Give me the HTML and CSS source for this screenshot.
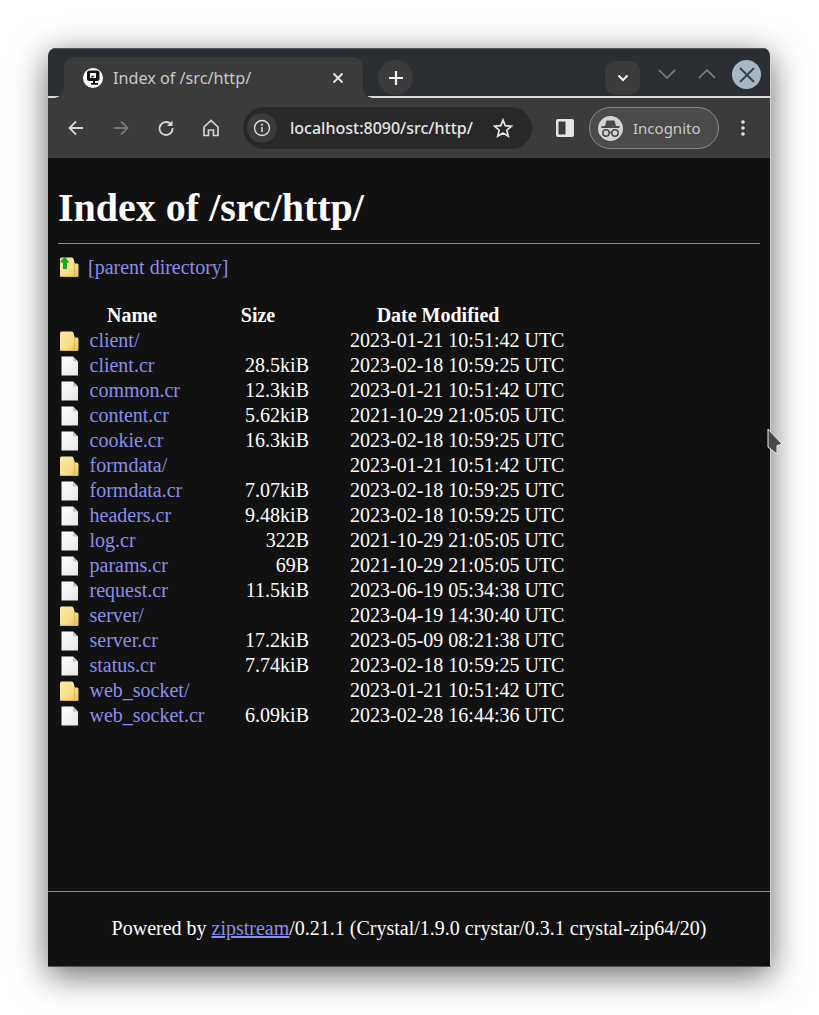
FILE: index.html
```html
<!DOCTYPE html>
<html lang="en">
<head>
<meta charset="utf-8">
<title>Index of /src/http/</title>
<link rel="stylesheet" href="styles.css">
</head>
<body>
<svg class="defs" width="0" height="0" aria-hidden="true">
  <defs>
    <linearGradient id="fold" x1="0" y1="0" x2="1" y2="1">
      <stop offset="0" stop-color="#fcebaa"/><stop offset="0.6" stop-color="#f8dd88"/><stop offset="1" stop-color="#e6be5c"/>
    </linearGradient>
    <linearGradient id="paper" x1="0" y1="0" x2="1" y2="1">
      <stop offset="0" stop-color="#ffffff"/><stop offset="1" stop-color="#e6e6e6"/>
    </linearGradient>
    <symbol id="i-folder" viewBox="0 0 20 20">
      <path d="M1 2Q1 0.500 2.500 0.500H13Q14 0.500 14.500 2L15.800 6.500H18Q19.500 6.500 19.500 8V18.500Q19.500 20 18 20H2.500Q1 20 1 18.500Z" fill="url(#fold)"/>
      <path d="M15.500 6.500V19.500" stroke="#dfb750" stroke-width="1" fill="none"/>
      <path d="M1.500 19.500H19" stroke="#dfb750" stroke-width="1" fill="none"/>
    </symbol>
    <symbol id="i-file" viewBox="0 0 20 20">
      <path d="M2.500 0.500H14L19 5.500V19.500H2.500Z" fill="url(#paper)"/>
      <path d="M14 0.500V5.500H19Z" fill="#c4c4c4"/>
    </symbol>
    <symbol id="i-up" viewBox="0 0 20 20">
      <use href="#i-folder"/>
      <path d="M5.500 -0.500L10.500 5.500H8V12H4V5.500H0.500Z" fill="#1fa51f"/>
    </symbol>
  </defs>
</svg>
<div class="window">
  <header class="strip">
    <div class="tab">
      <svg class="favicon" viewBox="0 0 20 20"><circle cx="10" cy="10" r="10" fill="#fff"/><rect x="4" y="2.500" width="12.500" height="10.500" rx="2.500" fill="#141414"/><path d="M7 5H13V10H9.500V8.700H11.500V7.800H8.500V10H7Z" fill="#fff"/><path d="M10 13H12V15H15V16.800H8V15H10Z" fill="#141414"/></svg>
      <span class="tab-title">Index of /src/http/</span>
      <svg class="tab-close" viewBox="0 0 12 12"><path d="M1.500 1.500L10.500 10.500M10.500 1.500L1.500 10.500" stroke="#e6e6e6" stroke-width="1.800" fill="none"/></svg>
    </div>
    <div class="newtab"><svg viewBox="0 0 16 16" width="16" height="16"><path d="M8 1V15M1 8H15" stroke="#f0f0f0" stroke-width="2.200" fill="none"/></svg></div>
    <div class="spacer"></div>
    <div class="tabsearch"><svg viewBox="0 0 12 8" width="12" height="8"><path d="M1.500 1.500L6 6L10.500 1.500" stroke="#f2f2f2" stroke-width="2" fill="none"/></svg></div>
    <svg class="winctl down" viewBox="0 0 18 10" width="18" height="10"><path d="M1 1L9 9L17 1" stroke="#7e8388" stroke-width="1.600" fill="none"/></svg>
    <svg class="winctl up" viewBox="0 0 18 10" width="18" height="10"><path d="M1 9L9 1L17 9" stroke="#7e8388" stroke-width="1.600" fill="none"/></svg>
    <div class="winclose"><svg viewBox="0 0 16 16" width="16" height="16"><path d="M1 1L15 15M15 1L1 15" stroke="#3a3f44" stroke-width="1.800" fill="none"/></svg></div>
  </header>
  <nav class="toolbar">
    <svg class="tb back" viewBox="0 0 20 20" width="20" height="20"><path d="M17 10H4M10 3.500L3.500 10L10 16.500" stroke="#d4d4d4" stroke-width="1.800" fill="none"/></svg>
    <svg class="tb fwd" viewBox="0 0 20 20" width="20" height="20"><path d="M3 10H16M10 3.500L16.500 10L10 16.500" stroke="#777" stroke-width="1.800" fill="none"/></svg>
    <svg class="tb reload" viewBox="0 0 20 20" width="20" height="20"><path d="M15.500 7A6.500 6.500 0 1 0 16.500 10" stroke="#d4d4d4" stroke-width="1.800" fill="none"/><path d="M16.500 2.500V8H11Z" fill="#d4d4d4"/></svg>
    <svg class="tb home" viewBox="0 0 20 20" width="20" height="20"><path d="M3 9L10 2.500L17 9V17.500H12.500V12H7.500V17.500H3Z" stroke="#d4d4d4" stroke-width="1.700" fill="none"/></svg>
    <div class="omnibox">
      <div class="info"><svg viewBox="0 0 18 18" width="18" height="18"><circle cx="9" cy="9" r="7.500" stroke="#dcdcdc" stroke-width="1.400" fill="none"/><path d="M9 8V13" stroke="#dcdcdc" stroke-width="1.500"/><circle cx="9" cy="5.700" r="1" fill="#dcdcdc"/></svg></div>
      <span class="url">localhost:8090/src/http/</span>
      <svg class="star" viewBox="0 0 20 20" width="20" height="20"><path d="M10 2L12.300 7.700L18.500 8.200L13.800 12.200L15.300 18.200L10 15L4.700 18.200L6.200 12.200L1.500 8.200L7.700 7.700Z" stroke="#e6e6e6" stroke-width="1.700" fill="none"/></svg>
    </div>
    <svg class="panel" viewBox="0 0 18 18" width="18" height="18"><rect x="0" y="0" width="18" height="18" rx="2" fill="#e4e4e4"/><rect x="2.500" y="2.500" width="7" height="13" fill="#3b3b3b"/></svg>
    <div class="pill">
      <div class="spy"><svg viewBox="0 0 25 25" width="25" height="25"><path d="M8.500 4.500H16.500L18 10H7Z" fill="#4a4a4a"/><path d="M3.500 11H21.500" stroke="#4a4a4a" stroke-width="1.800"/><circle cx="8" cy="17" r="3.200" stroke="#4a4a4a" stroke-width="1.500" fill="none"/><circle cx="17" cy="17" r="3.200" stroke="#4a4a4a" stroke-width="1.500" fill="none"/><path d="M11 16.500H14" stroke="#4a4a4a" stroke-width="1.300"/></svg></div>
      <span class="pill-text">Incognito</span>
    </div>
    <svg class="dots" viewBox="0 0 4 16" width="4" height="16"><circle cx="2" cy="2" r="1.800" fill="#e4e4e4"/><circle cx="2" cy="8" r="1.800" fill="#e4e4e4"/><circle cx="2" cy="14" r="1.800" fill="#e4e4e4"/></svg>
  </nav>
  <main class="page">
    <div class="content">
      <h1 class="title">Index of /src/http/</h1>
      <hr class="rule">
      <p class="parent"><svg class="ico" width="20" height="20"><use href="#i-up"/></svg><a href="#" class="link parent-link">[parent directory]</a></p>
      <table class="listing">
        <colgroup><col class="c-ico"><col class="c-name"><col class="c-size"><col class="c-date"></colgroup>
        <thead><tr><th class="th-name" colspan="2">Name</th><th class="th-size">Size</th><th class="th-date">Date Modified</th></tr></thead>
        <tbody>
          <tr><td><svg class="ico" width="20" height="20"><use href="#i-folder"/></svg></td><td class="name"><a href="#" class="link">client/</a></td><td class="size"></td><td class="date">2023-01-21 10:51:42 UTC</td></tr>
          <tr><td><svg class="ico" width="20" height="20"><use href="#i-file"/></svg></td><td class="name"><a href="#" class="link">client.cr</a></td><td class="size">28.5kiB</td><td class="date">2023-02-18 10:59:25 UTC</td></tr>
          <tr><td><svg class="ico" width="20" height="20"><use href="#i-file"/></svg></td><td class="name"><a href="#" class="link">common.cr</a></td><td class="size">12.3kiB</td><td class="date">2023-01-21 10:51:42 UTC</td></tr>
          <tr><td><svg class="ico" width="20" height="20"><use href="#i-file"/></svg></td><td class="name"><a href="#" class="link">content.cr</a></td><td class="size">5.62kiB</td><td class="date">2021-10-29 21:05:05 UTC</td></tr>
          <tr><td><svg class="ico" width="20" height="20"><use href="#i-file"/></svg></td><td class="name"><a href="#" class="link">cookie.cr</a></td><td class="size">16.3kiB</td><td class="date">2023-02-18 10:59:25 UTC</td></tr>
          <tr><td><svg class="ico" width="20" height="20"><use href="#i-folder"/></svg></td><td class="name"><a href="#" class="link">formdata/</a></td><td class="size"></td><td class="date">2023-01-21 10:51:42 UTC</td></tr>
          <tr><td><svg class="ico" width="20" height="20"><use href="#i-file"/></svg></td><td class="name"><a href="#" class="link">formdata.cr</a></td><td class="size">7.07kiB</td><td class="date">2023-02-18 10:59:25 UTC</td></tr>
          <tr><td><svg class="ico" width="20" height="20"><use href="#i-file"/></svg></td><td class="name"><a href="#" class="link">headers.cr</a></td><td class="size">9.48kiB</td><td class="date">2023-02-18 10:59:25 UTC</td></tr>
          <tr><td><svg class="ico" width="20" height="20"><use href="#i-file"/></svg></td><td class="name"><a href="#" class="link">log.cr</a></td><td class="size">322B</td><td class="date">2021-10-29 21:05:05 UTC</td></tr>
          <tr><td><svg class="ico" width="20" height="20"><use href="#i-file"/></svg></td><td class="name"><a href="#" class="link">params.cr</a></td><td class="size">69B</td><td class="date">2021-10-29 21:05:05 UTC</td></tr>
          <tr><td><svg class="ico" width="20" height="20"><use href="#i-file"/></svg></td><td class="name"><a href="#" class="link">request.cr</a></td><td class="size">11.5kiB</td><td class="date">2023-06-19 05:34:38 UTC</td></tr>
          <tr><td><svg class="ico" width="20" height="20"><use href="#i-folder"/></svg></td><td class="name"><a href="#" class="link">server/</a></td><td class="size"></td><td class="date">2023-04-19 14:30:40 UTC</td></tr>
          <tr><td><svg class="ico" width="20" height="20"><use href="#i-file"/></svg></td><td class="name"><a href="#" class="link">server.cr</a></td><td class="size">17.2kiB</td><td class="date">2023-05-09 08:21:38 UTC</td></tr>
          <tr><td><svg class="ico" width="20" height="20"><use href="#i-file"/></svg></td><td class="name"><a href="#" class="link">status.cr</a></td><td class="size">7.74kiB</td><td class="date">2023-02-18 10:59:25 UTC</td></tr>
          <tr><td><svg class="ico" width="20" height="20"><use href="#i-folder"/></svg></td><td class="name"><a href="#" class="link">web_socket/</a></td><td class="size"></td><td class="date">2023-01-21 10:51:42 UTC</td></tr>
          <tr><td><svg class="ico" width="20" height="20"><use href="#i-file"/></svg></td><td class="name"><a href="#" class="link">web_socket.cr</a></td><td class="size">6.09kiB</td><td class="date">2023-02-28 16:44:36 UTC</td></tr>
        </tbody>
      </table>
    </div>
    <footer class="foot">Powered by <a href="#" class="link foot-link">zipstream</a>/0.21.1 (Crystal/1.9.0 crystar/0.3.1 crystal-zip64/20)</footer>
  </main>
</div>
<svg class="cursor" viewBox="0 0 16 28" width="16" height="28"><path d="M1 1L15 16L10 17.500V26L1 19Z" fill="#4a4a4a" stroke="#e8e8e8" stroke-width="1"/></svg>
</body>
</html>
```
FILE: styles.css
```css
html, body { margin: 0; padding: 0; background: #fff; }
body { position: relative; width: 819px; height: 1015px; overflow: hidden; padding: 48px; box-sizing: border-box; font-family: "Liberation Serif", serif; }
.defs { position: absolute; }
.window { display: flex; flex-direction: column; height: 919px; box-sizing: border-box; border-right: 1px solid #d4d4d4; border-bottom: 1px solid #555; border-radius: 8px 8px 0 0; overflow: hidden; box-shadow: 0 8px 34px 0 rgba(0,0,0,.6); }

.strip { display: flex; align-items: flex-start; height: 50px; flex: none; box-sizing: border-box; background: #2b2e33; border-top: 1px solid #53565a; border-bottom: 2px solid #d9d9d9; }
.tab { position: relative; display: flex; align-items: center; margin: 8px 0 -2px 16px; width: 299px; height: 41px; box-sizing: border-box; padding: 0 19px 0 19px; background: #3b3b3b; border-radius: 10px 10px 0 0; }
.tab::before, .tab::after { content: ""; position: absolute; bottom: 0; width: 10px; height: 10px; }
.tab::before { left: -10px; background: radial-gradient(circle at 0 0, transparent 9.500px, #3b3b3b 10px); }
.tab::after { right: -10px; background: radial-gradient(circle at 100% 0, transparent 9.500px, #3b3b3b 10px); }
.favicon { width: 20px; height: 20px; flex: none; }
.tab-title { margin-left: 10px; flex: 1; padding-top: 1px; font: 16.2px/20px "Noto Sans", sans-serif; color: #c8c8c8; }
.tab-close { width: 12px; height: 12px; flex: none; }
.newtab { display: flex; align-items: center; justify-content: center; width: 35px; height: 35px; margin: 11px 0 0 15px; border-radius: 50%; background: #3b3b3b; }
.spacer { flex: 1; }
.tabsearch { display: flex; align-items: center; justify-content: center; width: 35px; height: 34px; margin-top: 12px; border-radius: 11px; background: #3b3b3b; }
.winctl { flex: none; margin-top: 20px; }
.down { margin-left: 18px; }
.up { margin-left: 22px; }
.winclose { display: flex; align-items: center; justify-content: center; width: 29px; height: 29px; margin: 11px 9px 0 16px; border-radius: 50%; background: #a7b7c3; }

.toolbar { display: flex; align-items: center; height: 60px; flex: none; background: #3b3b3b; padding-left: 18px; }
.tb { flex: none; }
.fwd, .reload, .home { margin-left: 25px; }
.omnibox { display: flex; align-items: center; width: 289px; height: 42px; margin-left: 22px; border-radius: 21px; background: #282828; }
.info { display: flex; align-items: center; justify-content: center; width: 30px; height: 30px; margin-left: 4px; border-radius: 50%; background: #3b3b3b; }
.url { margin-left: 13px; flex: 1; font: 500 16px/20px "Noto Sans", sans-serif; color: #e4e4e4; white-space: nowrap; }
.star { margin-right: 19px; }
.panel { margin-left: 24px; }
.pill { display: flex; align-items: center; width: 130px; height: 42px; margin-left: 15px; box-sizing: border-box; border: 1px solid #8a8a8a; border-radius: 21px; background: #4a4a4a; padding-left: 8px; }
.spy { display: flex; align-items: center; justify-content: center; width: 25px; height: 25px; border-radius: 50%; background: #d4d4d4; }
.pill-text { margin-left: 10px; font: 15px/20px "Noto Sans", sans-serif; color: #c8c8c8; }
.dots { margin-left: 22px; }

.page { flex: 1; display: flex; flex-direction: column; background: #111; color: #fff; font-size: 20px; }
.content { flex: 1; padding: 0 10px; }
.title { margin: 0; padding: 26px 0 0; font-size: 40px; line-height: 47px; font-weight: bold; }
.rule { margin: 12px 0 0; border: 0; border-top: 1px solid #8c8c8c; }
.parent { display: flex; align-items: center; margin: 12px 0 0; height: 22px; padding-left: 1px; line-height: 20px; }
.parent-link { margin-left: 9px; }
.ico { display: block; }
.link { color: #8a8eea; text-decoration: none; }
.listing { margin-top: 25px; border-collapse: collapse; table-layout: fixed; width: 505px; margin-left: 1px; }
.c-ico { width: 30px; }
.c-name { width: 118px; }
.c-size { width: 102px; }
.c-date { width: 255px; }
.listing th, .listing td { padding: 0; height: 25px; line-height: 25px; font-weight: normal; text-align: left; white-space: nowrap; }
.listing th { text-align: center; font-weight: bold; }
.listing .th-name { padding-right: 2px; }
.listing .name { padding-left: 0.500px; }
.listing td.size { text-align: right; }
.listing .date { padding-left: 41px; }
.listing .th-date { padding-left: 3px; }
.foot { height: 75px; flex: none; box-sizing: border-box; border-top: 1px solid #8c8c8c; text-align: center; line-height: 73px; }
.foot-link { text-decoration: underline; }
.cursor { position: absolute; left: 767px; top: 428px; }
```
